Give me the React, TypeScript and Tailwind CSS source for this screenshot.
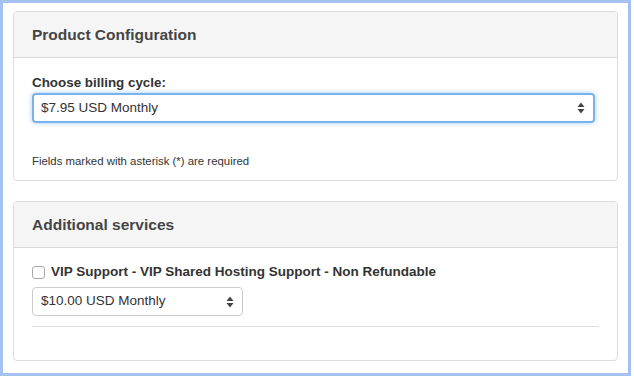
import React from 'react';

function UpDownArrows() {
  return (
    <svg width="8" height="12" viewBox="0 0 8 12" className="shrink-0">
      <path d="M4 0.5 L7.5 5 H0.5 Z" fill="#444" />
      <path d="M4 11.5 L7.5 7 H0.5 Z" fill="#444" />
    </svg>
  );
}

function Panel({ title, children }: { title: string; children: React.ReactNode }) {
  return (
    <div className="border border-[#dcdcdc] rounded-[4px] bg-white overflow-hidden">
      <div className="h-[46px] bg-[#f5f5f5] border-b border-[#d8d8d8] flex items-center px-[18px] pt-[1px]">
        <h2 className="text-[15.5px] font-bold text-[#454545]">{title}</h2>
      </div>
      {children}
    </div>
  );
}

export default function App() {
  return (
    <div
      className="w-[631px] h-[376px] border-[3px] border-[#a6c2f1] bg-white px-[10px] pt-[8px]"
      style={{ fontFamily: '"Liberation Sans", Arial, sans-serif' }}
    >
      {/* Product Configuration */}
      <Panel title="Product Configuration">
        <div className="px-[18px] pt-[15px] pb-[12px] h-[122px]">
          <label className="block text-[13.4px] leading-[20px] font-bold text-[#333]">Choose billing cycle:</label>
          <div className="mr-[4px] h-[30px] flex items-center justify-between pl-[7px] pr-[8px] border-2 border-[#7db1ec] rounded-[4px] shadow-[0_0_5px_rgba(102,175,233,0.6)]">
            <span className="text-[13.5px] text-[#333]">$7.95 USD Monthly</span>
            <UpDownArrows />
          </div>
          <p className="mt-[30px] text-[11.4px] leading-[16px] text-[#333]">Fields marked with asterisk (*) are required</p>
        </div>
      </Panel>

      <div className="h-[20px]" />

      {/* Additional services */}
      <Panel title="Additional services">
        <div className="px-[18px] pt-[14px] h-[112px]">
          <label className="flex items-center gap-[6px] text-[13.5px] leading-[20px] font-bold text-[#333]">
            <span className="w-[13px] h-[13px] rounded-[3px] border border-[#a9a9a9] bg-white shrink-0" />
            VIP Support - VIP Shared Hosting Support - Non Refundable
          </label>
          <div className="mt-[5px] w-[211px] h-[29px] flex items-center justify-between pl-[8px] pr-[8px] border border-[#cccccc] rounded-[4px]">
            <span className="text-[13.5px] text-[#333]">$10.00 USD Monthly</span>
            <UpDownArrows />
          </div>
          <div className="mt-[10px] border-t border-[#dddddd]" />
        </div>
      </Panel>
    </div>
  );
}
